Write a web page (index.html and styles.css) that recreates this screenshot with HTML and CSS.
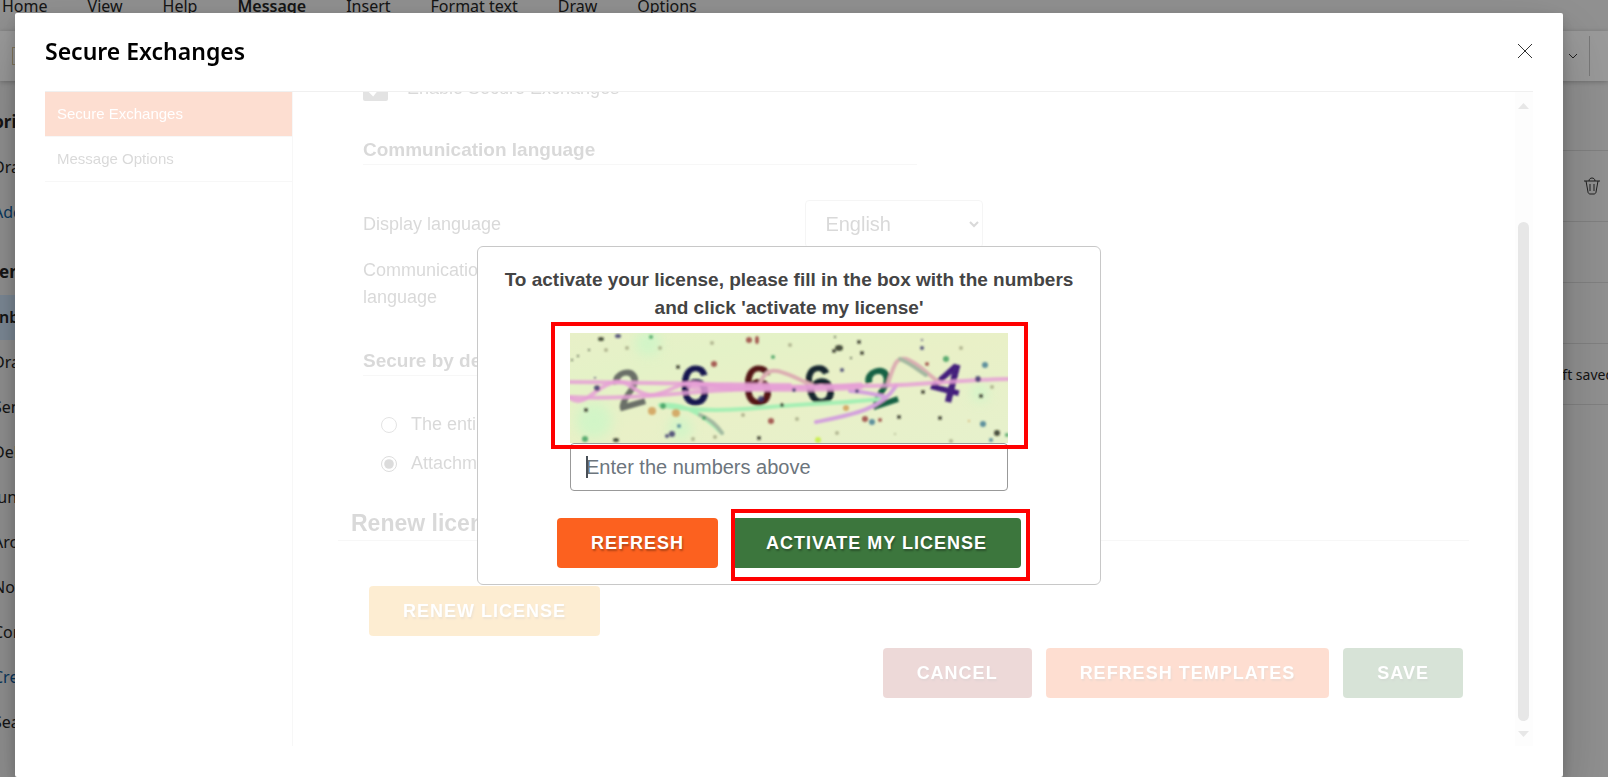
FILE: index.html
```html
<!DOCTYPE html>
<html lang="en">
<head>
  <meta charset="UTF-8" />
  <meta name="viewport" content="width=device-width, initial-scale=1.0"/>
  <title>Secure Exchanges</title>
  <link rel="stylesheet" href="styles.css">
</head>
<body>

  <div class="mail">
    <nav class="menu-bar">
      <a href="#">Home</a>
      <a href="#">View</a>
      <a href="#">Help</a>
      <a href="#" class="current">Message</a>
      <a href="#">Insert</a>
      <a href="#">Format text</a>
      <a href="#">Draw</a>
      <a href="#">Options</a>
    </nav>

    <div class="ribbon">
      <span class="ribbon-icon"></span>
      <svg class="ribbon-chevron" viewBox="0 0 10 6" width="10" height="6"><path d="M1 1l4 4 4-4"/></svg>
      <span class="ribbon-divider"></span>
    </div>

    <div class="mail-body">
      <ul class="folders">
        <li class="group">Favorites</li>
        <li>Drafts</li>
        <li class="link">Add favorite</li>
        <li class="group second">Clients</li>
        <li class="selected">Inbox</li>
        <li>Drafts</li>
        <li>Sent Items</li>
        <li>Deleted Items</li>
        <li>Junk Email</li>
        <li>Archive</li>
        <li>Notes</li>
        <li>Conversation</li>
        <li class="link">Create folder</li>
        <li>Search Folders</li>
      </ul>

      <div class="compose">
        <div class="compose-row"></div>
        <div class="compose-row tall">
          <svg class="trash" viewBox="0 0 16 18" width="16" height="18">
            <path d="M0 4h16M5 4c0-4 6-4 6 0M2 4l2 11c0 1 1 2 2 2h4c1 0 2-1 2-2l2-11M6 7v7M10 7v7"/>
          </svg>
        </div>
        <div class="compose-row"></div>
        <div class="compose-row"></div>
        <div class="compose-row"><span class="saved">Draft saved</span></div>
      </div>
    </div>
  </div>

  <div class="backdrop"></div>

  <div class="modal">
    <header class="modal-header">
      <h1>Secure Exchanges</h1>
      <button class="close" aria-label="Close">
        <svg viewBox="0 0 16 16" width="16" height="16"><path d="M1 1l14 14M15 1L1 15"/></svg>
      </button>
    </header>

    <div class="modal-body">
      <nav class="tabs">
        <a href="#" class="active">Secure Exchanges</a>
        <a href="#">Message Options</a>
      </nav>

      <div class="content">
        <label class="enable"><input type="checkbox" checked>Enable Secure Exchanges</label>

        <h3>Communication language</h3>
        <div class="field">
          <label for="displayLang">Display language</label>
          <select id="displayLang"><option>English</option></select>
        </div>
        <div class="field">
          <label for="commLang">Communication language</label>
          <select id="commLang"><option>English</option></select>
        </div>

        <h3 class="secure">Secure by default</h3>
        <label class="choice"><input type="radio" name="secure">The entire message</label>
        <label class="choice"><input type="radio" name="secure" checked>Attachments only</label>

        <h2>Renew license</h2>
        <button class="btn yellow renew">Renew license</button>

        <div class="actions">
          <button class="btn wine">Cancel</button>
          <button class="btn orange">Refresh templates</button>
          <button class="btn green">Save</button>
        </div>
      </div>

      <div class="scrollbar">
        <svg viewBox="0 0 11 6" width="11" height="6"><path d="M0 6L5.500 0L11 6z"/></svg>
        <span class="thumb"></span>
        <svg viewBox="0 0 11 6" width="11" height="6"><path d="M0 0h11L5.500 6z"/></svg>
      </div>
    </div>

    <form class="popup">
      <label class="popup-text" for="captchaInput">To activate your license, please fill in the box with the numbers and click 'activate my license'</label>
      <div class="captcha">
        <svg viewBox="0 0 438 110" role="img" aria-label="captcha">
          <defs>
            <filter id="soft"><feGaussianBlur stdDeviation="0.9"/></filter>
            <filter id="haze"><feGaussianBlur stdDeviation="6"/></filter>
            <linearGradient id="paper" x1="0" y1="0" x2="1" y2="1">
              <stop offset="0" stop-color="#e8f0c8"/>
              <stop offset="0.250" stop-color="#e4f2c7"/>
              <stop offset="0.500" stop-color="#e9f0c7"/>
              <stop offset="1" stop-color="#e6f1cc"/>
            </linearGradient>
          </defs>
          <rect width="438" height="110" fill="url(#paper)"/>
          <g fill="#c4f8c8" opacity="0.6" filter="url(#haze)">
            <circle cx="78" cy="10" r="13"/><circle cx="24" cy="88" r="18"/>
            <circle cx="110" cy="95" r="12"/><circle cx="410" cy="60" r="9"/>
          </g>
          <g filter="url(#soft)">
            <g class="digits">
              <text x="43" y="75" fill="#6b7068" stroke="#6b7068" transform="rotate(-16 56 55)">2</text>
              <text x="110" y="71" fill="#151550" stroke="#151550">6</text>
              <text x="173" y="71" fill="#541619" stroke="#541619">6</text>
              <text x="234" y="70" fill="#17272f" stroke="#17272f" transform="rotate(-12 250 50)">6</text>
              <text x="296" y="73" fill="#176245" stroke="#176245" transform="rotate(-18 310 55)">2</text>
              <text x="362" y="67" fill="#45207d" stroke="#45207d" transform="rotate(14 376 50)">4</text>
            </g>
            <g class="scribble">
              <path class="mint" d="M90 72c30 6 70 6 110 2s80-4 110-8"/>
              <path class="mint" d="M92 72c20-2 40 8 60 28"/>
              <path class="gray" d="M130 82c8 3 16 9 22 18"/>
              <path class="lilac" d="M246 89c35-7 65-12 80-36"/>
              <path class="lilac" d="M280 58c15 1 25 3 36 6"/>
              <path class="rose" d="M318 50c6-18 8-26 18-24c12 4 20 14 34 24"/>
              <path class="gray" d="M330 26c10 4 18 11 26 16"/>
              <path class="rose" d="M190 50c6-14 14-14 24-10c10 3 18 8 28 12"/>
              <path class="pink" d="M0 49c60 0 110 2 220 3"/>
              <path class="pink" d="M0 64c60 3 110-5 160-7s90-4 130-4c60 0 90-6 148-7"/>
              <path class="pink" d="M0 65c5 4 12 4 20-2s20-16 32-14c10 2 14 12 28 13c18 0 26-13 45-12c20 2 40 8 65 5"/>
              <path class="pink wide" d="M120 53c50 2 120 4 170 0"/>
            </g>
            <g opacity="0.8">
              <g fill="#22281c">
                <ellipse cx="31" cy="6" rx="3" ry="2"/><ellipse cx="269" cy="15" rx="4" ry="3"/>
                <circle cx="264" cy="18" r="2"/><circle cx="265" cy="4" r="1"/><circle cx="289" cy="9" r="2"/>
                <circle cx="292" cy="20" r="2"/><circle cx="16" cy="77" r="2"/><ellipse cx="46" cy="107" rx="3" ry="2"/>
                <circle cx="108" cy="34" r="2"/><circle cx="212" cy="72" r="2"/><circle cx="329" cy="84" r="2"/>
                <circle cx="427" cy="100" r="3"/><circle cx="370" cy="85" r="2"/><circle cx="353" cy="59" r="2"/>
                <circle cx="189" cy="105" r="2"/><circle cx="411" cy="63" r="2"/><circle cx="19" cy="17" r="1"/>
                <circle cx="8" cy="23" r="1"/><circle cx="2" cy="27" r="1"/><circle cx="281" cy="25" r="1"/>
              </g>
              <g fill="#343069">
                <ellipse cx="48" cy="3" rx="3" ry="2"/><circle cx="27" cy="55" r="3"/><circle cx="102" cy="101" r="3"/>
                <circle cx="97" cy="103" r="2"/><circle cx="408" cy="46" r="3"/><circle cx="191" cy="66" r="3"/>
                <circle cx="272" cy="37" r="2"/><circle cx="25" cy="45" r="1"/><circle cx="287" cy="58" r="2"/>
                <circle cx="352" cy="7" r="1"/><circle cx="352" cy="15" r="2"/><circle cx="224" cy="57" r="2"/>
              </g>
              <g fill="#963838">
                <circle cx="179" cy="7" r="3"/><ellipse cx="187" cy="7" rx="2" ry="4"/><circle cx="144" cy="31" r="3"/>
                <circle cx="201" cy="88" r="3"/><circle cx="295" cy="86" r="3"/><circle cx="357" cy="31" r="2"/>
                <circle cx="310" cy="87" r="2"/>
              </g>
              <g fill="#399a5c">
                <circle cx="15" cy="106" r="3"/><circle cx="81" cy="4" r="2"/><circle cx="93" cy="73" r="3"/>
                <circle cx="203" cy="24" r="2"/><circle cx="376" cy="26" r="3"/><circle cx="134" cy="85" r="2"/>
                <circle cx="437" cy="102" r="2"/>
              </g>
              <g fill="#3d7892">
                <circle cx="302" cy="89" r="3"/><circle cx="413" cy="91" r="3"/><circle cx="415" cy="32" r="3"/>
                <circle cx="421" cy="107" r="2"/><circle cx="109" cy="93" r="2"/>
              </g>
              <g fill="#d09a52">
                <circle cx="82" cy="78" r="4"/><circle cx="106" cy="80" r="4"/><circle cx="276" cy="75" r="3"/>
                <circle cx="399" cy="88" r="1"/>
              </g>
              <g fill="#a3a681">
                <circle cx="220" cy="12" r="2"/><circle cx="57" cy="15" r="2"/><circle cx="90" cy="15" r="2"/>
                <circle cx="142" cy="10" r="2"/><circle cx="391" cy="15" r="2"/><circle cx="422" cy="54" r="2"/>
                <circle cx="227" cy="86" r="2"/><circle cx="267" cy="100" r="2"/><circle cx="123" cy="106" r="2"/>
                <circle cx="145" cy="104" r="2"/><circle cx="325" cy="101" r="1"/><circle cx="173" cy="82" r="2"/>
                <circle cx="381" cy="108" r="2"/><circle cx="36" cy="17" r="2"/>
              </g>
              <circle cx="248" cy="107" r="3" fill="#c5ee35"/>
            </g>
          </g>
        </svg>
        <span class="highlight around-captcha"></span>
      </div>
      <div class="captcha-field">
        <input type="text" id="captchaInput" placeholder="Enter the numbers above">
        <span class="caret"></span>
      </div>
      <div class="popup-actions">
        <button type="button" class="btn orange">Refresh</button>
        <div class="activate">
          <button type="button" class="btn green">Activate my license</button>
          <span class="highlight around-activate"></span>
        </div>
      </div>
    </form>
  </div>

</body>
</html>
```
FILE: styles.css
```css
* {
  box-sizing: border-box;
}

body {
  margin: 0;
  height: 100vh;
  overflow: hidden;
  font-family: "Liberation Sans", Arial, sans-serif;
  font-size: 18px;
  line-height: 27px;
  color: #444;
}

a {
  color: inherit;
  text-decoration: none;
}

/* mail window behind the dialog */
.mail {
  display: flex;
  flex-direction: column;
  height: 100%;
  overflow: hidden;
  isolation: isolate;
  background: #f0f0f0;
  color: #242424;
  font-family: "Noto Sans", sans-serif;
  font-size: 16px;
}

.menu-bar {
  display: flex;
  gap: 40px;
  height: 31px;
  padding-left: 2px;
  line-height: 13px;
  white-space: nowrap;
}

.menu-bar .current {
  font-weight: 600;
}

.ribbon {
  display: flex;
  align-items: center;
  height: 50px;
  padding: 0 18px 0 12px;
  background: #fff;
  box-shadow: 0 1px 5px rgba(0,0,0,0.25);
  z-index: 1;
}

.ribbon-icon {
  width: 18px;
  height: 18px;
  border: 1px solid #d9c79a;
}

.ribbon-chevron {
  margin-left: auto;
  margin-right: 11px;
}

.ribbon svg,
.trash {
  fill: none;
  stroke: #333;
}

.ribbon-divider {
  width: 1px;
  height: 40px;
  background: #c8c8c8;
}

.mail-body {
  display: flex;
  flex: 1;
}

.folders {
  width: 260px;
  margin: 0;
  padding: 19px 0 0;
  list-style: none;
}

/* the folder pane is scrolled sideways */
.folders li {
  height: 45px;
  line-height: 45px;
  text-indent: -7px;
}

.folders .group {
  font-weight: 700;
  font-size: 17px;
  line-height: 43px;
  text-indent: -36px;
}

.folders .second {
  margin-top: 15px;
  text-indent: -22px;
}

.folders .link {
  color: #0f5c9c;
}

.folders .selected {
  background: #cfe4fa;
  font-weight: 600;
}

.compose {
  flex: 1;
  padding-top: 9px;
}

.compose-row {
  display: flex;
  align-items: center;
  justify-content: flex-end;
  height: 61px;
  padding-right: 8px;
  border-bottom: 1px solid #d6d6d6;
}

.compose-row.tall {
  height: 71px;
}

.saved {
  margin-right: -14px;
  font-size: 14px;
  white-space: nowrap;
}

.backdrop {
  position: fixed;
  inset: 0;
  background: rgba(0,0,0,0.4);
}

/* dialog */
.modal {
  position: fixed;
  inset: 13px 45px 0 15px;
  display: flex;
  flex-direction: column;
  padding: 0 30px 31px;
  border-radius: 2px;
  background: #fff;
  box-shadow: 0 26px 58px rgba(0,0,0,0.22), 0 5px 14px rgba(0,0,0,0.18);
}

.modal-header {
  display: flex;
  flex-shrink: 0;
  align-items: center;
  justify-content: space-between;
  height: 79px;
  padding-bottom: 2px;
  border-bottom: 1px solid #f0f0f0;
}

.modal-header h1 {
  margin: 0;
  color: #000;
  font-family: "Noto Sans", sans-serif;
  font-size: 23px;
  font-weight: 600;
}

.close {
  display: flex;
  padding: 0;
  border: none;
  background: none;
}

.close svg {
  fill: none;
  stroke: #333;
}

.modal-body {
  display: flex;
  flex: 1;
  min-height: 0;
  opacity: 0.2;
}

.tabs {
  width: 248px;
  border-right: 1px solid #d8d8d8;
  font-size: 15px;
}

.tabs a {
  display: block;
  padding: 8px 12px 9px;
  border-bottom: 1px solid #d8d8d8;
}

.tabs .active {
  background: #fa5f1f;
  color: #fff;
}

.content {
  display: flex;
  flex: 1;
  flex-direction: column;
  justify-content: flex-end;
  padding: 0 46px 48px 45px;
  overflow: hidden;
}

.content > * {
  flex-shrink: 0;
}

.enable,
.choice {
  display: flex;
  align-items: center;
}

.enable {
  margin: 0 0 34px 25px;
}

.enable input {
  width: 25px;
  height: 25px;
  margin: 0 19px 0 0;
  accent-color: #777;
}

.content h3 {
  width: 49%;
  margin: 0 0 35px 25px;
  border-bottom: 1px solid #d8d8d8;
  font-size: 19px;
  line-height: 28px;
}

.content .secure {
  margin-top: 27px;
}

.field {
  display: grid;
  grid-template-columns: 40% 178px;
  align-items: center;
  margin: 0 0 9px 25px;
}

.field label {
  max-width: 150px;
}

.field select {
  height: 48px;
  padding: 0 0 0 15px;
  border: 1px solid #d0d0d0;
  border-radius: 4px;
  background: #fff;
  color: #444;
  font: inherit;
  font-size: 20px;
}

.choice {
  margin: 0 0 12px 43px;
}

.choice input {
  width: 16px;
  height: 16px;
  margin: 0 14px 0 0;
  accent-color: #555;
}

.content h2 {
  margin: 17px 0 45px;
  padding-left: 13px;
  border-bottom: 1px solid #d8d8d8;
  font-size: 23px;
  line-height: 34px;
}

.btn {
  height: 50px;
  padding: 0 34px;
  border: none;
  border-radius: 4px;
  color: #fff;
  font-family: inherit;
  font-size: 18px;
  font-weight: bold;
  letter-spacing: 1px;
  text-transform: uppercase;
  text-shadow: 1px 2px 2px rgba(0,0,0,0.3);
  white-space: nowrap;
  cursor: pointer;
}

.orange {
  background: #fc611f;
}

.green {
  background: #3c763d;
}

.yellow {
  background: #f9a825;
}

.wine {
  background: #a94442;
}

.renew {
  align-self: flex-start;
  margin-left: 31px;
}

.actions {
  display: flex;
  justify-content: flex-end;
  gap: 14px;
  margin-top: 12px;
  padding-right: 6px;
}

.scrollbar {
  display: flex;
  flex-direction: column;
  align-items: center;
  width: 18px;
  padding: 11px 4px 9px 3px;
  background: #f9f9f9;
}

.scrollbar svg {
  fill: #8a8a8a;
}

.thumb {
  flex: 1;
  width: 11px;
  margin: 113px 0 10px;
  border-radius: 6px;
  background: #8a8a8a;
}

/* activation box */
.popup {
  position: absolute;
  top: 233px;
  left: 50%;
  width: 624px;
  padding: 19px 24px 16px;
  transform: translateX(-50%);
  border: 1px solid #c8c8c8;
  border-radius: 6px;
  background: #fff;
}

.popup-text {
  display: block;
  font-size: 19px;
  font-weight: bold;
  line-height: 28px;
  text-align: center;
}

.captcha,
.captcha-field {
  position: relative;
  width: 438px;
  margin: 0 auto;
}

.captcha {
  margin-top: 11px;
}

.captcha svg {
  display: block;
}

.digits {
  font-size: 53px;
  stroke-width: 2px;
}

.scribble {
  fill: none;
  stroke-width: 4px;
  stroke-linecap: round;
}

.pink { stroke: #e6a0d6; stroke-opacity: 0.85; }
.wide { stroke-width: 7px; }
.rose { stroke: #dcaeb2; }
.lilac { stroke: #d3a1dd; }
.mint { stroke: #a5efb4; }
.gray { stroke: #a3b8a0; }

.captcha-field input {
  display: block;
  width: 100%;
  height: 48px;
  padding: 0 15px;
  border: 1px solid #999;
  border-radius: 4px;
  background: #fff;
  font-family: inherit;
  font-size: 20px;
}

.captcha-field input::placeholder {
  color: #6c757d;
}

.caret {
  position: absolute;
  top: 13px;
  left: 16px;
  width: 2px;
  height: 22px;
  background: #495057;
}

.popup-actions {
  display: flex;
  justify-content: center;
  gap: 14px;
  margin-top: 27px;
}

.activate {
  position: relative;
}

.highlight {
  position: absolute;
  border: 4px solid #f00;
  pointer-events: none;
  z-index: 1;
}

.around-captcha {
  inset: -11px -20px -6px -19px;
}

.around-activate {
  inset: -9px -9px -13px -1px;
}
```
